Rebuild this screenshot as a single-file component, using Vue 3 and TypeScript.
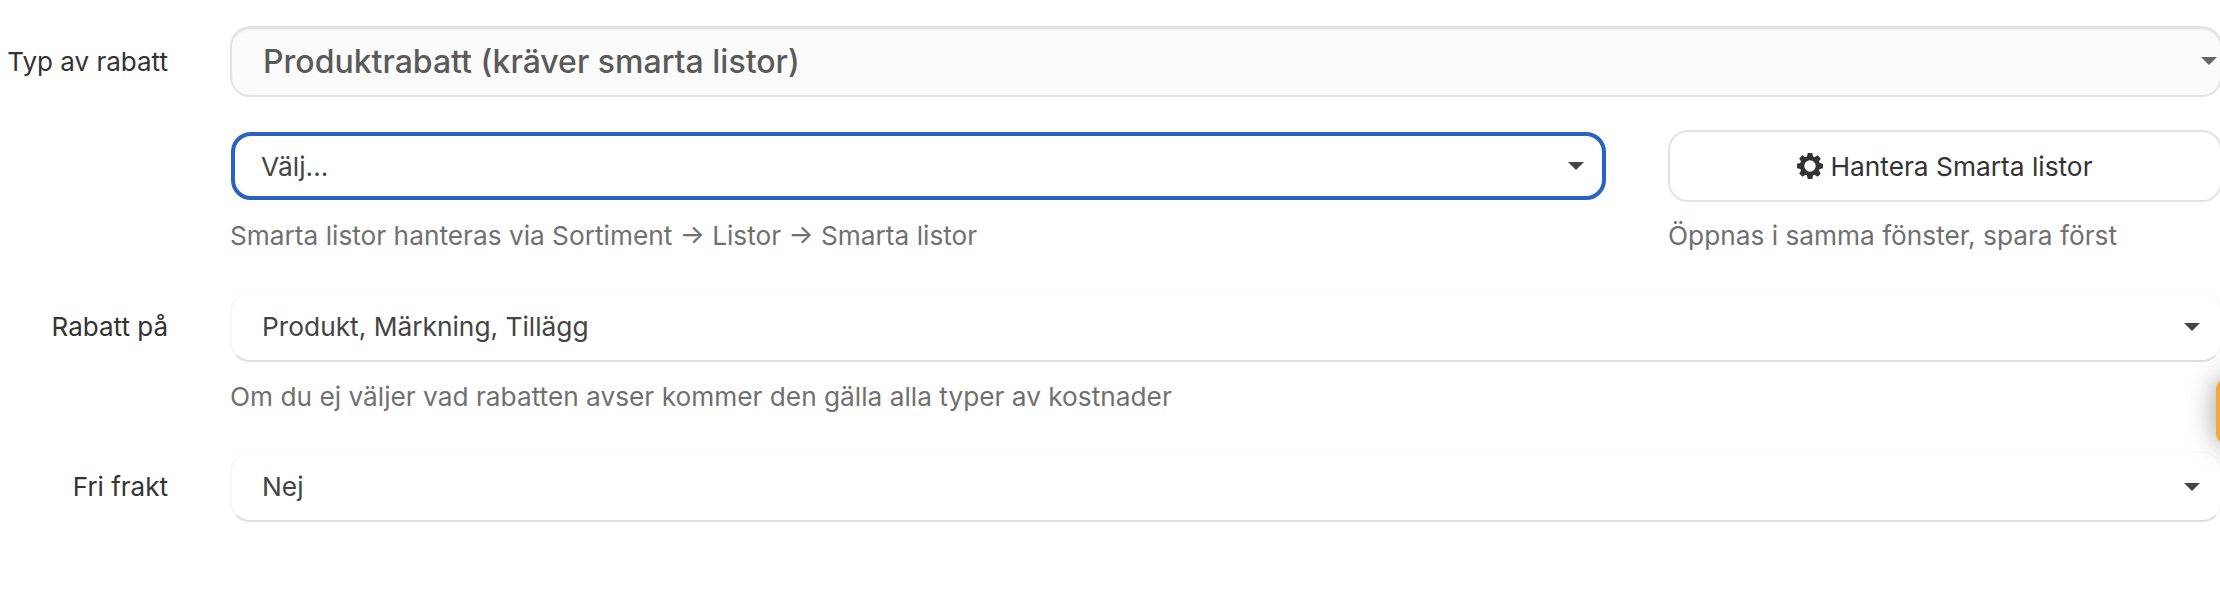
<script setup lang="ts">
// the eight teeth of the gear
const teeth = [0, 45, 90, 135, 180, 225, 270, 315]
</script>

<template>
  <div class="page">
    <form class="form">
      <label class="label label-type">Typ av rabatt</label>
      <div class="select select-large">
        <span>Produktrabatt (kräver smarta listor)</span>
        <i class="caret caret-large"></i>
      </div>

      <div class="list-row">
        <div class="list-col">
          <div class="select select-focus">
            <span>Välj...</span>
            <i class="caret"></i>
          </div>
          <small class="help">Smarta listor hanteras via Sortiment → Listor → Smarta listor</small>
        </div>
        <div class="list-col">
          <button type="button" class="manage-btn">
            <svg class="cog" viewBox="-13 -13 26 26">
              <circle r="7.9" fill="none" stroke="currentColor" stroke-width="4.4" />
              <polygon
                v-for="deg in teeth"
                :key="deg"
                points="-3.2,-8.5 3.2,-8.5 2.3,-13 -2.3,-13"
                fill="currentColor"
                :transform="`rotate(${deg})`"
              />
            </svg>
            Hantera Smarta listor
          </button>
          <small class="help help-btn">Öppnas i samma fönster, spara först</small>
        </div>
      </div>

      <label class="label label-plain">Rabatt på</label>
      <div class="field">
        <div class="select select-plain">
          <span>Produkt, Märkning, Tillägg</span>
          <i class="caret"></i>
        </div>
        <small class="help">Om du ej väljer vad rabatten avser kommer den gälla alla typer av kostnader</small>
      </div>

      <label class="label label-plain">Fri frakt</label>
      <div class="select select-plain">
        <span>Nej</span>
        <i class="caret"></i>
      </div>
    </form>
    <div class="side-tab"></div>
  </div>
</template>

<style>
html,
body {
  margin: 0;
  background: #fff;
  overflow: hidden;
}
</style>

<style scoped>
.page {
  position: relative;
  width: 2222px;
  height: 590px;
  overflow: hidden;
  font-family: Inter, 'Liberation Sans', sans-serif;
  font-size: 26.3px;
  color: #333;
}
.form {
  display: grid;
  grid-template-columns: 168px 1fr;
  column-gap: 62px;
  padding-top: 26px;
}
.label {
  font-size: 26px;
  text-align: right;
  white-space: nowrap;
}
.label-type {
  line-height: 71px;
}
.label-plain {
  line-height: 72px;
}
.select {
  box-sizing: border-box;
  height: 71px;
  display: flex;
  align-items: center;
  justify-content: space-between;
  background: #fff;
  color: #444;
}
.select-large {
  padding: 0 3px 2px 31px;
  background: #fbfbfb;
  border: 2px solid #e3e3e3;
  border-top-width: 3px;
  border-radius: 20px;
  box-shadow: inset 0 1px 2px rgba(0, 0, 0, 0.06);
  font-size: 32px;
  font-weight: 500;
  color: #5a5a5a;
}
.select-focus {
  height: 68px;
  margin: 2px 0 0 1px;
  padding: 0 18px 0 26px;
  border: 4px solid #2962c4;
  border-radius: 20px;
}
.select-plain {
  padding: 0 20px 0 30px;
  border: 2px solid #f7f7f7;
  border-top-color: #fcfcfc;
  border-bottom-color: #dedede;
  border-radius: 20px;
}
.caret {
  width: 0;
  height: 0;
  border-left: 8px solid transparent;
  border-right: 8px solid transparent;
  border-top: 8px solid #444;
}
.caret-large {
  border-top-color: #666;
}
.list-row {
  grid-column: 2;
  display: grid;
  grid-template-columns: 1fr 554px;
  column-gap: 62px;
  margin-top: 33px;
  margin-bottom: 39px;
  height: 122px;
}
.list-col {
  display: flex;
  flex-direction: column;
}
.manage-btn {
  box-sizing: border-box;
  height: 72px;
  display: flex;
  align-items: center;
  justify-content: center;
  gap: 7px;
  background: #fff;
  border: 2px solid #e3e3e3;
  border-radius: 20px;
  font: inherit;
  color: #333;
}
.cog {
  width: 26px;
  height: 26px;
}
.help {
  display: block;
  margin-top: 20px;
  font-size: 26.25px;
  line-height: 32px;
  color: #707070;
}
.help-btn {
  margin-top: 18px;
}
.field .help {
  margin-top: 19px;
}
.field {
  margin-bottom: 38px;
}
.side-tab {
  position: absolute;
  left: 2216px;
  top: 378px;
  width: 40px;
  height: 67px;
  border-radius: 12px;
  background: #f0a93b;
  box-shadow: 0 0 28px rgba(0, 0, 0, 0.4);
}
</style>
